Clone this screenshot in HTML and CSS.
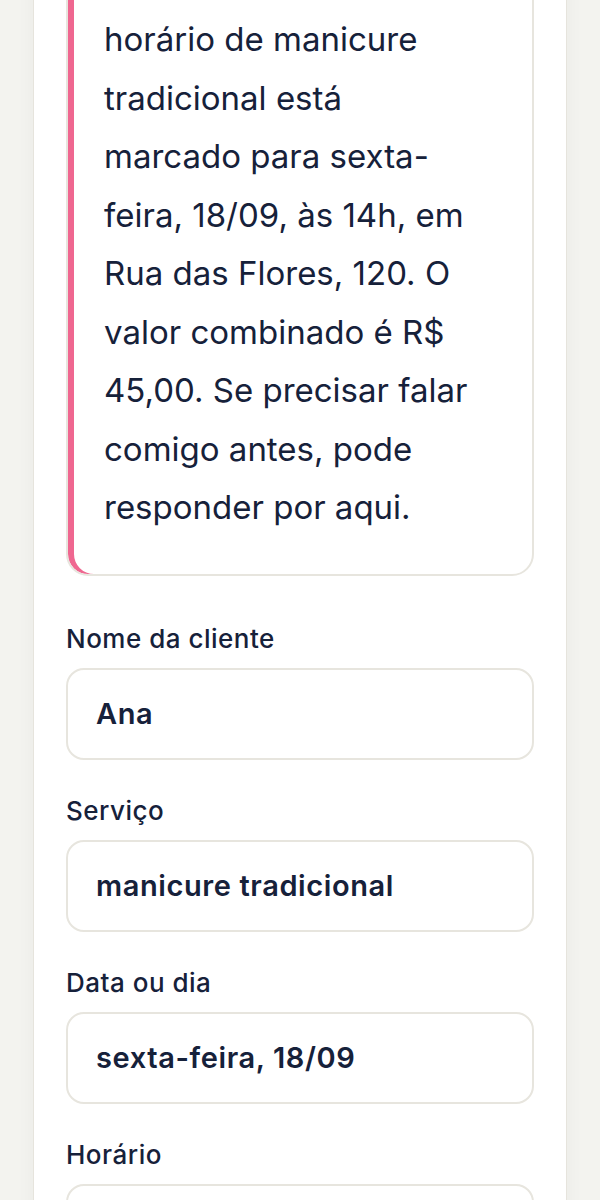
FILE: index.html
```html
<!DOCTYPE html>
<html lang="pt-br">
<head>
    <meta charset="UTF-8">
    <meta name="viewport" content="width=device-width, initial-scale=1.0">
    <title>Confirmação de horário</title>
    <link rel="stylesheet" href="styles.css">
</head>
<body>
    <div class="card">
        <div class="message">
            <p>horário de manicure tradicional está marcado para sexta-feira, 18/09, às 14h, em Rua das Flores, 120. O valor combinado é R$ 45,00. Se precisar falar comigo antes, pode responder por aqui.</p>
        </div>

        <form class="booking-form">
            <label for="clientName">Nome da cliente</label>
            <input type="text" id="clientName" value="Ana">

            <label for="service">Serviço</label>
            <input type="text" id="service" value="manicure tradicional">

            <label for="day">Data ou dia</label>
            <input type="text" id="day" value="sexta-feira, 18/09">

            <label for="time">Horário</label>
            <input type="text" id="time" value="14h">
        </form>
    </div>
</body>
</html>
```

FILE: styles.css
```css
body {
    margin: 0;
    font-family: Inter, "Noto Sans", sans-serif;
    background-color: #f3f3ef;
    color: #16213a;
}

.card {
    width: 534px;
    box-sizing: border-box;
    margin: -61px auto 0;
    padding: 32px 32px 40px;
    background-color: #fff;
    border: 1px solid #e6e4dd;
    box-shadow: 0 0 18px rgba(0, 0, 0, 0.04);
}

.message {
    border: 2px solid #e7e5de;
    border-radius: 22px;
    box-shadow: inset 6px 0 0 #ef6790;
    padding: 36px 50px 37px 36px;
}

.message p {
    margin: 0;
    font-size: 33px;
    line-height: 58.5px;
}

.booking-form {
    margin-top: 46px;
}

.booking-form label {
    display: block;
    font-size: 26px;
    font-weight: 500;
    line-height: 34px;
    letter-spacing: 0.5px;
    margin-bottom: 12px;
}

.booking-form input {
    display: block;
    width: 100%;
    height: 92px;
    box-sizing: border-box;
    padding: 0 28px;
    margin-bottom: 34px;
    border: 2px solid #e7e5de;
    border-radius: 18px;
    background-color: #fff;
    color: #16213a;
    font-family: inherit;
    font-size: 29px;
    font-weight: 600;
    letter-spacing: 0.6px;
}
```
